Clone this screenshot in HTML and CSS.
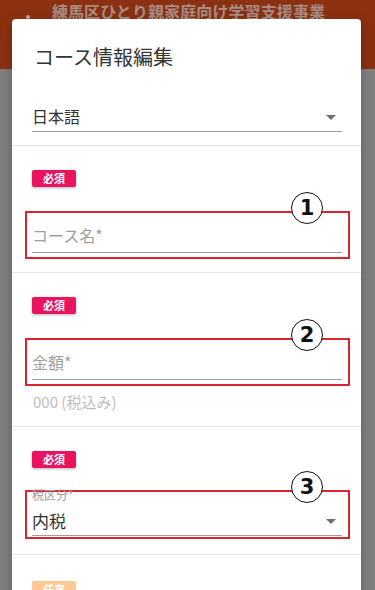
FILE: index.html
```html
<!DOCTYPE html>
<html lang="ja">
<head>
<meta charset="utf-8">
<link rel="stylesheet" href="styles.css">
</head>
<body>
<div class="app">
  <header class="appbar">
    <span class="back"></span>
    <span class="appbar-title">練馬区ひとり親家庭向け学習支援事業</span>
  </header>
  <div class="backdrop"></div>
</div>
<div class="dialog">
  <h1 class="dialog-title">コース情報編集</h1>
  <div class="lang">
    <div class="select">
      <span class="select-value">日本語</span>
      <span class="arrow"></span>
    </div>
  </div>
  <section class="section">
    <span class="badge">必須</span>
    <div class="box">
      <span class="num">1</span>
      <div class="field"><span class="placeholder">コース名*</span></div>
    </div>
  </section>
  <section class="section">
    <span class="badge">必須</span>
    <div class="box">
      <span class="num">2</span>
      <div class="field"><span class="placeholder">金額*</span></div>
    </div>
    <div class="helper">000 (税込み)</div>
  </section>
  <section class="section sec-tax">
    <span class="badge">必須</span>
    <div class="box box-select">
      <span class="num">3</span>
      <span class="float-label">税区分*</span>
      <div class="field field-select"><span class="select-value">内税</span><span class="arrow"></span></div>
    </div>
  </section>
  <section class="section last">
    <span class="badge badge-opt">任意</span>
  </section>
</div>
</body>
</html>
```
FILE: styles.css
```css
html, body {
  margin: 0;
  padding: 0;
}
body {
  width: 375px;
  height: 590px;
  overflow: hidden;
  position: relative;
  background: #7f7f7f;
  font-family: "Noto Sans CJK JP", "Noto Sans", sans-serif;
}
.app {
  display: flex;
  flex-direction: column;
  height: 590px;
}
.appbar {
  height: 69px;
  background: #8b3112;
  display: flex;
  justify-content: center;
  position: relative;
}
.appbar-title {
  font-size: 16px;
  font-weight: bold;
  color: #a88b82;
  line-height: 22px;
  margin-top: 0;
  padding-left: 2px;
  letter-spacing: 0.1px;
}
.back {
  position: absolute;
  left: 26px;
  top: 15px;
  width: 4px;
  height: 4px;
  border-radius: 2px;
  background: #c9a8a0;
}
.backdrop {
  flex: 1;
  background: #7f7f7f;
}
.dialog {
  position: absolute;
  left: 12px;
  top: 19px;
  width: 349px;
  height: 620px;
  background: #fff;
  border-radius: 4px;
  box-shadow: 0 4px 12px rgba(0,0,0,0.25);
}
.dialog-title {
  margin: 0;
  padding: 22px 22px 0;
  font-size: 20px;
  line-height: 32px;
  font-weight: normal;
  color: #333;
}
.lang {
  padding: 25px 19px 13px 20px;
  border-bottom: 1px solid #e6e6e6;
}
.select {
  display: flex;
  align-items: center;
  justify-content: space-between;
  height: 34px;
  box-sizing: border-box;
  border-bottom: 1px solid #9e9e9e;
  padding-top: 3px;
}
.select-value {
  font-size: 16px;
  color: #333;
  line-height: 24px;
}
.arrow {
  width: 0;
  height: 0;
  border-left: 5px solid transparent;
  border-right: 5px solid transparent;
  border-top: 5px solid #6f6f6f;
  margin-right: 6px;
  margin-top: 2px;
}
.section {
  padding: 24px 19px 13px 20px;
  border-bottom: 1px solid #e6e6e6;
  display: flex;
  flex-direction: column;
  align-items: flex-start;
}
.section.sec-tax {
  padding-bottom: 15px;
}
.section.last {
  border-bottom: none;
  padding-top: 26px;
}
.badge {
  width: 44px;
  height: 17px;
  background: #e8145f;
  color: #fff;
  font-size: 11px;
  font-weight: bold;
  line-height: 17px;
  text-align: center;
  border-radius: 2px;
  box-shadow: 0 1px 3px rgba(0,0,0,0.3);
}
.badge-opt {
  background: #ffc894;
  box-shadow: none;
}
.box {
  align-self: stretch;
  position: relative;
  margin: 24px -8px 0 -7px;
  border: 2px solid #dc2430;
  height: 44px;
  padding: 0 6px 0 5px;
}
.num {
  position: absolute;
  top: -21px;
  right: 25px;
  width: 30px;
  height: 30px;
  border: 1px solid #111;
  border-radius: 50%;
  background: #fff;
  color: #111;
  font-family: "DejaVu Sans", sans-serif;
  font-weight: bold;
  font-size: 21px;
  line-height: 30px;
  text-align: center;
}
.field {
  border-bottom: 1px solid #9e9e9e;
  display: flex;
  align-items: flex-end;
  padding-bottom: 5px;
  box-sizing: border-box;
  height: 40px;
}
.placeholder {
  font-size: 16px;
  line-height: 24px;
  color: #9e9e9e;
}
.helper {
  margin-top: 5px;
  font-size: 15px;
  line-height: 22px;
  color: #bdbdbd;
  padding-left: 1px;
}
.box-select {
  margin-top: 22px;
  height: 45px;
}
.box-select .field {
  height: 44px;
  justify-content: space-between;
  align-items: center;
  padding-top: 14px;
  padding-bottom: 0;
}
.box-select .select-value {
  font-size: 17px;
}
.float-label {
  position: absolute;
  top: -4px;
  left: 5px;
  font-size: 12px;
  line-height: 14px;
  color: #9e9e9e;
}
```
